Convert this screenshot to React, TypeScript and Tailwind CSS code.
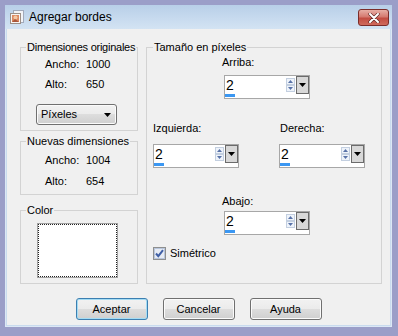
import React from 'react';

const SpinField = () => (
  <div className="w-[86px] h-[24px] border border-[#a7a7a7] bg-white flex flex-col">
    <div className="flex h-[18px]">
      <div className="flex-1 pl-[1px] text-[14px] leading-[18px] text-black">2</div>
      <svg width="9" height="18" viewBox="0 0 9 18">
        <rect x="0.5" y="2.5" width="8" height="6" fill="#eef3fa" stroke="#c3cfe0" />
        <rect x="0.5" y="9.5" width="8" height="6" fill="#eef3fa" stroke="#c3cfe0" />
        <path d="M4.5 4 L7 7 L2 7 Z" fill="#5872a8" />
        <path d="M2 11 L7 11 L4.5 14 Z" fill="#5872a8" />
      </svg>
      <div className="w-[13px] h-[18px] ml-[1px] border border-[#6b6b6b] bg-[#d8d8d8] flex items-center justify-center">
        <svg width="7" height="4" viewBox="0 0 7 4">
          <path d="M0 0 L7 0 L3.5 4 Z" fill="#000" />
        </svg>
      </div>
    </div>
    <div className="flex-1">
      <div className="w-[10px] h-[3px] bg-[#3b97f2]" />
    </div>
  </div>
);

const Btn = ({ label, def }: { label: string; def?: boolean }) => (
  <div
    className={`w-[72px] h-[22px] rounded-[3px] border ${
      def ? 'border-[#3c7fb1] shadow-[inset_0_0_0_1px_#a4dcf4]' : 'border-[#707070] shadow-[inset_0_0_0_1px_#fbfbfb]'
    } bg-[linear-gradient(#f2f2f2_0%,#ebebeb_50%,#dddddd_50%,#cfcfcf_100%)] flex items-center justify-center text-[11px] text-black`}
  >
    {label}
  </div>
);

const Row = ({ k, v }: { k: string; v: string }) => (
  <div className="flex pl-[24px] text-[11px] leading-[13px] text-black">
    <span className="w-[41px]">{k}</span>
    <span>{v}</span>
  </div>
);

export default function App() {
  return (
    <div className="w-[398px] h-[336px] bg-[#9b9ec8] pt-[5px] pl-[5px] pr-[6px] pb-[9px] font-['Liberation_Sans',Arial,sans-serif]">
      <div className="h-full flex flex-col bg-[#c9dbee] px-[2px] pb-[2px] shadow-[inset_0_0_0_1px_#dce8f5]">
        {/* title bar */}
        <div className="h-[24px] shrink-0 -mx-[2px] flex items-center pl-[4px] pr-[3px] bg-[linear-gradient(#b8cfe8,#d3e3f3)]">
          <svg width="16" height="16" viewBox="0 0 16 16">
            <rect x="4.5" y="1.5" width="10" height="12" fill="#f2f4f8" stroke="#a2aabb" />
            <rect x="1.5" y="4.5" width="10" height="10" fill="#f6f6f6" stroke="#9c8f86" />
            <rect x="3" y="6" width="7" height="7" fill="#dd8a62" />
            <circle cx="6.5" cy="8.5" r="2" fill="#f3c8a6" />
            <path d="M3 13 L6 10 L10 13 Z" fill="#a8563a" />
          </svg>
          <span className="ml-[4px] text-[12px] text-black">Agregar bordes</span>
          <div className="ml-auto mt-[1px] w-[31px] h-[17px] rounded-[3px] border border-[#7b2d2a] bg-[linear-gradient(#e7aea5_0%,#d57a70_45%,#c24d42_55%,#cf6a5c_100%)] flex items-center justify-center">
            <svg width="12" height="10" viewBox="0 0 12 10">
              <path d="M2 1 L10 9 M10 1 L2 9" stroke="#5a2523" strokeWidth="3.2" strokeLinecap="round" />
              <path d="M2 1 L10 9 M10 1 L2 9" stroke="#ffffff" strokeWidth="2" strokeLinecap="round" />
            </svg>
          </div>
        </div>

        {/* client */}
        <div className="flex-1 min-h-0 bg-[#f0f0f0] flex flex-col pt-[12px] pl-[13px] pr-[8px] text-[11px] text-black">
          <div className="flex gap-[8px]">
            {/* left column */}
            <div className="w-[118px] flex flex-col">
              <fieldset className="border border-[#d3d3d3] pb-[5px]">
                <legend className="ml-[5px] px-[1px] leading-[13px] whitespace-nowrap tracking-[-0.25px]">Dimensiones originales</legend>
                <div className="pt-[4px]">
                  <Row k="Ancho:" v="1000" />
                </div>
                <div className="pt-[7px]">
                  <Row k="Alto:" v="650" />
                </div>
                <div className="pt-[13px] pl-[15px]">
                  <div className="w-[81px] h-[21px] rounded-[3px] border border-[#707070] shadow-[inset_0_0_0_1px_#fbfbfb] bg-[linear-gradient(#f2f2f2_0%,#ebebeb_50%,#dddddd_50%,#cfcfcf_100%)] flex items-center pl-[4px] pr-[5px]">
                    <span>Píxeles</span>
                    <svg width="7" height="4" viewBox="0 0 7 4" className="ml-auto">
                      <path d="M0 0 L7 0 L3.5 4 Z" fill="#000" />
                    </svg>
                  </div>
                </div>
              </fieldset>

              <fieldset className="mt-[4px] border border-[#d3d3d3] pb-[6px]">
                <legend className="ml-[5px] px-[1px] leading-[13px] whitespace-nowrap">Nuevas dimensiones</legend>
                <div className="pt-[6px]">
                  <Row k="Ancho:" v="1004" />
                </div>
                <div className="pt-[8px]">
                  <Row k="Alto:" v="654" />
                </div>
              </fieldset>

              <fieldset className="mt-[9px] border border-[#d3d3d3] pb-[5px]">
                <legend className="ml-[5px] px-[1px] leading-[13px]">Color</legend>
                <div className="pt-[6px] pl-[16px]">
                  <div className="w-[81px] h-[55px] border border-[#a0a0a0] bg-white">
                    <div className="w-full h-full border border-dotted border-[#222]" />
                  </div>
                </div>
              </fieldset>
            </div>

            {/* right group */}
            <fieldset className="flex-1 border border-[#d3d3d3]">
              <legend className="ml-[6px] px-[1px] leading-[13px] whitespace-nowrap">Tamaño en píxeles</legend>
              <div className="pt-[2px] pl-[75px] leading-[13px]">Arriba:</div>
              <div className="pt-[6px] pl-[77px]">
                <SpinField />
              </div>

              <div className="flex pt-[23px]">
                <div className="w-[132px] pl-[6px]">
                  <div className="leading-[13px]">Izquierda:</div>
                  <div className="pt-[9px]">
                    <SpinField />
                  </div>
                </div>
                <div>
                  <div className="pl-[1px] leading-[13px]">Derecha:</div>
                  <div className="pt-[9px]">
                    <SpinField />
                  </div>
                </div>
              </div>

              <div className="pt-[27px] pl-[75px] leading-[13px]">Abajo:</div>
              <div className="pt-[3px] pl-[77px]">
                <SpinField />
              </div>

              <div className="pt-[12px] pl-[6px] flex items-center">
                <svg width="13" height="13" viewBox="0 0 13 13">
                  <rect x="0.5" y="0.5" width="12" height="12" fill="#f4f4f4" stroke="#8e8f8f" />
                  <rect x="1.5" y="1.5" width="10" height="10" fill="#e6ebf4" stroke="#b9c6dc" />
                  <path d="M3 6.5 L5.3 9.2 L10 3.2" fill="none" stroke="#3f5fa6" strokeWidth="2" />
                </svg>
                <span className="ml-[4px] leading-[13px]">Simétrico</span>
              </div>
            </fieldset>
          </div>

          <div className="mt-[14px] flex justify-center gap-[15px] pr-[5px]">
            <Btn label="Aceptar" def />
            <Btn label="Cancelar" />
            <Btn label="Ayuda" />
          </div>
        </div>
      </div>
    </div>
  );
}
